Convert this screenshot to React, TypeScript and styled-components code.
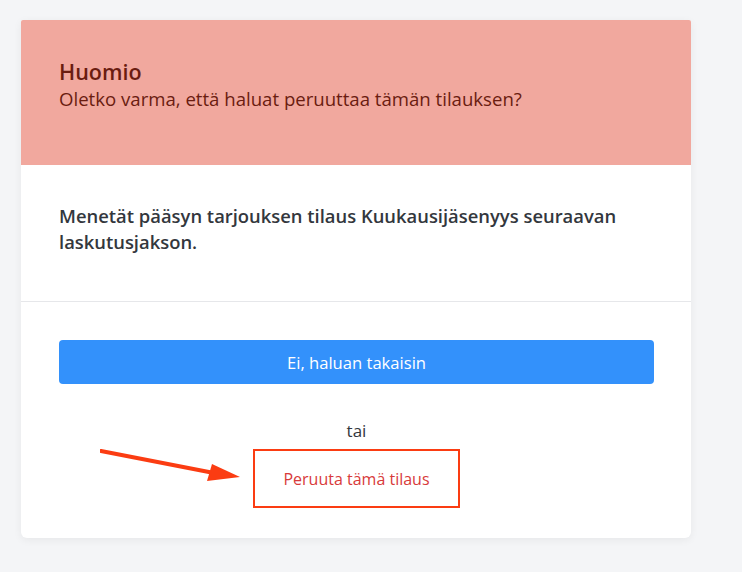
import React from "react";
import styled, { createGlobalStyle } from "styled-components";

const Global = createGlobalStyle`
  html, body { margin: 0; padding: 0; background: #f4f5f7; }
  body { font-family: "Segoe UI", "Open Sans", "Liberation Sans", sans-serif; }
`;

const Page = styled.div`
  padding: 20px 51px 34px 21px;
  min-height: 572px;
  box-sizing: border-box;
`;

const Card = styled.div`
  width: 670px;
  background: #ffffff;
  border-radius: 2px 2px 6px 6px;
  box-shadow: 0 2px 8px rgba(0, 0, 0, 0.06);
  overflow: hidden;
`;

const Header = styled.div`
  background: #f1a89e;
  padding: 38px 38px 0 38px;
  height: 145px;
  box-sizing: border-box;
  color: #6a1c10;
`;

const Title = styled.h2`
  margin: 0;
  font-size: 21.5px;
  font-weight: 600;
  line-height: 28px;
`;

const Subtitle = styled.p`
  margin: 0;
  font-size: 18.6px;
  line-height: 26px;
`;

const Body = styled.div`
  padding: 38px 38px 0 38px;
  height: 137px;
  box-sizing: border-box;
  border-bottom: 1px solid #e6e7ea;
`;

const BodyText = styled.p`
  margin: 0;
  font-size: 18.4px;
  font-weight: 600;
  line-height: 26px;
  color: #33373d;
`;

const Footer = styled.div`
  position: relative;
  padding: 38px 37px 30px 38px;
  display: flex;
  flex-direction: column;
  align-items: center;
`;

const PrimaryButton = styled.button`
  width: 100%;
  height: 44px;
  border: none;
  border-radius: 4px;
  background: #3391fb;
  color: #ffffff;
  font-family: inherit;
  font-size: 16.6px;
  cursor: pointer;
`;

const Or = styled.div`
  margin-top: 36px;
  font-size: 17px;
  line-height: 22px;
  color: #33373d;
`;

const CancelLink = styled.a`
  margin-top: 7px;
  display: inline-flex;
  align-items: center;
  justify-content: center;
  width: 207px;
  height: 59px;
  box-sizing: border-box;
  border: 2px solid #fb3c12;
  color: #d83a3a;
  font-size: 16px;
  text-decoration: none;
  cursor: pointer;
`;

const Arrow = styled.svg`
  position: absolute;
  left: 79px;
  top: 147px;
  width: 145px;
  height: 40px;
`;

export default function App() {
  return (
    <>
      <Global />
      <Page>
        <Card>
          <Header>
            <Title>Huomio</Title>
            <Subtitle>Oletko varma, että haluat peruuttaa tämän tilauksen?</Subtitle>
          </Header>
          <Body>
            <BodyText>
              Menetät pääsyn tarjouksen tilaus Kuukausijäsenyys seuraavan laskutusjakson.
            </BodyText>
          </Body>
          <Footer>
            <PrimaryButton>Ei, haluan takaisin</PrimaryButton>
            <Or>tai</Or>
            <CancelLink>Peruuta tämä tilaus</CancelLink>
            <Arrow viewBox="0 0 145 40">
              <line x1="1" y1="2" x2="114" y2="24" stroke="#fb3c12" strokeWidth="4" strokeLinecap="round" />
              <polygon points="140,28 112,15 107,32" fill="#fb3c12" />
            </Arrow>
          </Footer>
        </Card>
      </Page>
    </>
  );
}
